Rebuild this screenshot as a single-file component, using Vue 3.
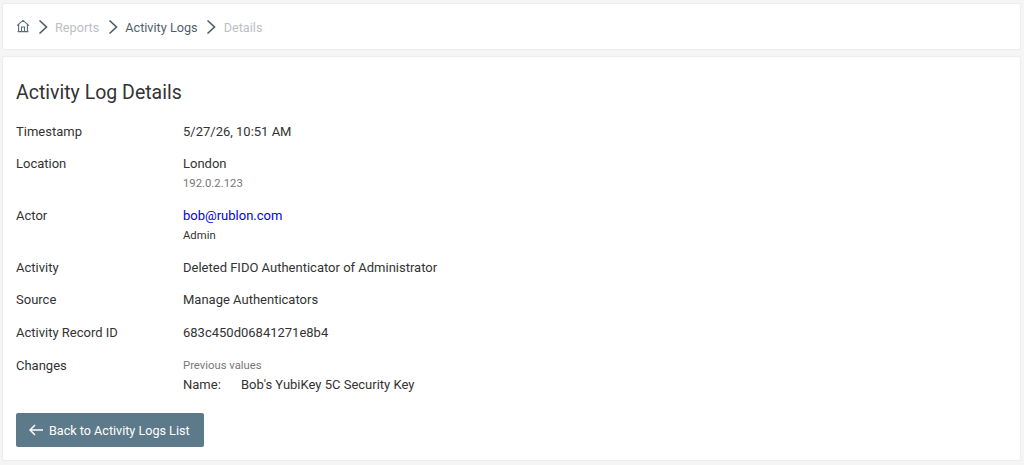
<script setup>
const rows = [
  { label: 'Timestamp', value: '5/27/26, 10:51 AM', h: 32 },
  { label: 'Location', value: 'London', sub: '192.0.2.123', subClass: 'grey', h: 52 },
  { label: 'Actor', value: 'bob@rublon.com', link: true, sub: 'Admin', subClass: 'dark', h: 52 },
  { label: 'Activity', value: 'Deleted FIDO Authenticator of Administrator', h: 32 },
  { label: 'Source', value: 'Manage Authenticators', h: 33 },
  { label: 'Activity Record ID', value: '683c450d06841271e8b4', h: 32 }
]
</script>

<template>
  <div class="page">
    <nav class="card crumbs">
      <svg class="home" width="14" height="14" viewBox="0 0 14 14" fill="none" stroke="#5a6b76" stroke-width="1.1">
        <path d="M1 6.6 7 1.4l6 5.2M2.6 5.6V12.6h8.8V5.6M1.6 12.6h10.8M5.5 12.6V8h3v4.6" />
      </svg>
      <svg class="chev" width="10" height="16" viewBox="0 0 10 16" fill="none" stroke="#4a5a65" stroke-width="1.6"><path d="M1.5 1.5 8.5 8l-7 6.5" /></svg>
      <span class="muted">Reports</span>
      <svg class="chev" width="10" height="16" viewBox="0 0 10 16" fill="none" stroke="#4a5a65" stroke-width="1.6"><path d="M1.5 1.5 8.5 8l-7 6.5" /></svg>
      <span class="active">Activity Logs</span>
      <svg class="chev" width="10" height="16" viewBox="0 0 10 16" fill="none" stroke="#4a5a65" stroke-width="1.6"><path d="M1.5 1.5 8.5 8l-7 6.5" /></svg>
      <span class="muted">Details</span>
    </nav>
    <main class="card body">
      <h1>Activity Log Details</h1>
      <div v-for="r in rows" :key="r.label" class="row" :style="{ height: r.h + 'px' }">
        <div class="label">{{ r.label }}</div>
        <div class="value">
          <a v-if="r.link" class="link">{{ r.value }}</a>
          <span v-else>{{ r.value }}</span>
          <div v-if="r.sub" class="sub" :class="r.subClass">{{ r.sub }}</div>
        </div>
      </div>
      <div class="row changes">
        <div class="label">Changes</div>
        <div class="value">
          <div class="prev">Previous values</div>
          <div class="pair"><span class="key">Name:</span><span>Bob's YubiKey 5C Security Key</span></div>
        </div>
      </div>
      <button class="back">
        <svg width="15" height="12" viewBox="0 0 15 12" fill="none" stroke="#fff" stroke-width="1.5"><path d="M14 6H1.2M6 1 1 6l5 5" /></svg>
        <span>Back to Activity Logs List</span>
      </button>
    </main>
  </div>
</template>

<style>
body { margin: 0; background: #f5f5f5; }
</style>

<style scoped>
.page {
  height: 465px;
  box-sizing: border-box;
  padding: 4px 4px 5px 3px;
  display: flex;
  flex-direction: column;
  gap: 8px;
  font-family: Roboto, sans-serif;
  font-size: 13px;
  color: #333;
  overflow: hidden;
}
.card {
  background: #fff;
  border-radius: 2px;
  box-shadow: 0 0 2px rgba(0, 0, 0, 0.12);
}
.crumbs {
  height: 45px;
  flex: none;
  box-sizing: border-box;
  padding: 1px 13px 0;
  display: flex;
  align-items: center;
  font-size: 12.7px;
}
.home { margin-right: 7.5px; margin-top: -3px; }
.chev { margin-right: 7.5px; }
.muted { color: #bcc0c4; margin-right: 8.5px; }
.active { color: #4f5f6a; margin-right: 8.5px; }
.body {
  flex: 1;
  padding: 0 13px;
}
h1 {
  margin: 0;
  height: 60px;
  padding-top: 23px;
  box-sizing: border-box;
  font-size: 19.5px;
  line-height: 26px;
  font-weight: 400;
  color: #333;
}
.row {
  display: flex;
  line-height: 16px;
  padding-top: 7px;
  box-sizing: border-box;
}
.label { width: 167px; flex: none; }
.link { color: #0000ee; }
.sub { font-size: 11.3px; margin-top: 4px; line-height: 15px; }
.grey { color: #777; }
.dark { color: #333; }
.changes { height: 50px; padding-top: 8px; }
.prev { font-size: 11.3px; color: #777; line-height: 14px; margin-bottom: 4px; margin-top: 1px; }
.pair { display: flex; }
.key { width: 58px; }
.back {
  display: flex;
  align-items: center;
  gap: 5px;
  width: 188px;
  height: 34px;
  margin-top: 13px;
  padding: 0 13px;
  background: #5c7a8a;
  border: 0;
  border-radius: 2px;
  color: #fff;
  font-family: Roboto, sans-serif;
  font-size: 12.6px;
  white-space: nowrap;
}
.back svg { flex: none; }
</style>
